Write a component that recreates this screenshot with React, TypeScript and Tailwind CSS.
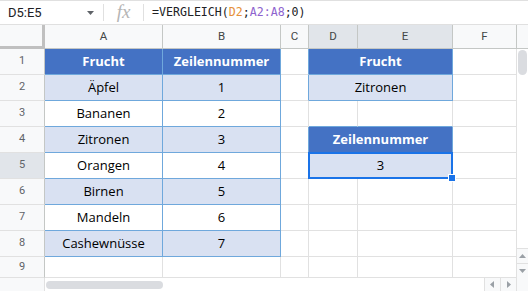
const cellFont = { fontFamily: '"Open Sans", "Noto Sans", sans-serif' };

const G = "border-[#e1e1e1]";
const B = "border-[#6fa8dc]";
const HEAD = "bg-[#4472c4] text-white font-bold";
const LIGHT = "bg-[#d9e1f2]";

const cols = ["A", "B", "C", "D", "E", "F"];

const fruits = [
  ["Äpfel", "1"],
  ["Bananen", "2"],
  ["Zitronen", "3"],
  ["Orangen", "4"],
  ["Birnen", "5"],
  ["Mandeln", "6"],
  ["Cashewnüsse", "7"],
];

function Tri({ dir, className = "" }: { dir: "up" | "down" | "left" | "right"; className?: string }) {
  const pts = {
    up: "1,6 4.5,2 8,6",
    down: "1,2 4.5,6 8,2",
    left: "6,1 2,4.5 6,8",
    right: "3,1 7,4.5 3,8",
  }[dir];
  return (
    <svg width="9" height="9" viewBox="0 0 9 9" className={className}>
      <polygon points={pts} fill="#9aa0a6" />
    </svg>
  );
}

function RowHead({ n, active = false }: { n: number; active?: boolean }) {
  return (
    <div
      className={`flex items-center justify-center border-r border-b border-r-[#c4c7c5] ${G} text-[11px] text-[#5f6368] ${
        active ? "bg-[#e1e5ea]" : "bg-[#f8f9fa]"
      }`}
      style={{ fontFamily: "Roboto, sans-serif" }}
    >
      {n}
    </div>
  );
}

function Cell({ className = "", children }: { className?: string; children?: React.ReactNode }) {
  return (
    <div className={`flex items-center justify-center border-r border-b text-[13px] ${className}`} style={cellFont}>
      {children}
    </div>
  );
}

export default function App() {
  return (
    <div className="w-[528px] h-[291px] overflow-hidden bg-white text-black">
      {/* formula bar */}
      <div className="h-[25px] border-t border-b border-[#e0e0e0] flex items-center">
        <div className="w-[103px] flex items-center pl-[8px] pr-[9px] text-[13px] text-[#202124]" style={{ fontFamily: "Roboto, sans-serif" }}>
          <span className="flex-1">D5:E5</span>
          <svg width="7" height="4" viewBox="0 0 7 4">
            <polygon points="0,0 7,0 3.5,4" fill="#5f6368" />
          </svg>
        </div>
        <div className="w-px h-[17px] bg-[#e0e0e0]" />
        <div className="w-[39px] flex justify-center text-[19px] italic text-[#b5b5b5] leading-none -mt-[2px]" style={{ fontFamily: '"Liberation Serif", serif' }}>
          fx
        </div>
        <div className="w-px h-[17px] bg-[#e0e0e0]" />
        <div className="pl-[8px] text-[11.6px] text-[#202124]" style={{ fontFamily: '"DejaVu Sans Mono", monospace' }}>
          =VERGLEICH(<span className="text-[#e69138]">D2</span>;<span className="text-[#8e63ce]">A2:A8</span>;0)
        </div>
      </div>

      {/* sheet grid */}
      <div className="grid grid-cols-[45px_118px_118px_28px_49px_95px_64px_11px] grid-rows-[24px_repeat(8,26px)_21px]">
        {/* column headers */}
        <div className="bg-[#f8f9fa] border-r-[3px] border-b-[3px] border-[#c0c0c0]" />
        {cols.map((c) => (
          <div
            key={c}
            className={`flex items-center justify-center border-r border-b border-[#c4c7c5] text-[11.5px] text-[#444746] ${
              c === "D" || c === "E" ? "bg-[#e1e5ea]" : "bg-[#f8f9fa]"
            }`}
            style={{ fontFamily: "Roboto, sans-serif" }}
          >
            {c}
          </div>
        ))}
        <div className="bg-[#f8f9fa] border-b border-[#c4c7c5]" />

        {/* row 1 */}
        <RowHead n={1} />
        <Cell className={`${HEAD} ${B}`}>Frucht</Cell>
        <Cell className={`${HEAD} ${B}`}>Zeilennummer</Cell>
        <Cell className={`border-b-[#e1e1e1] ${B}`} />
        <Cell className={`col-span-2 ${HEAD} ${B}`}>Frucht</Cell>
        <Cell className={G} />

        {/* vertical scrollbar */}
        <div className="row-span-9 flex flex-col bg-white">
          <div className="mt-[1px] mx-[1px] h-[25px] rounded-full bg-[#dadce0]" />
          <div className="flex-1" />
          <div className="h-[15px] border-t border-[#e1e1e1] bg-[#f8f9fa] flex items-center justify-center">
            <Tri dir="up" />
          </div>
          <div className="h-[15px] border-t border-[#e1e1e1] bg-[#f8f9fa] flex items-center justify-center">
            <Tri dir="down" />
          </div>
        </div>

        {fruits.map(([f, n], i) => {
          const row = i + 2;
          const fill = i % 2 === 0 ? LIGHT : "bg-white";
          return (
            <div key={f} className="contents">
              <RowHead n={row} active={row === 5} />
              <Cell className={`${fill} ${B}`}>{f}</Cell>
              <Cell className={`${fill} ${B}`}>{n}</Cell>
              {row === 2 && (
                <>
                  <Cell className={`border-b-[#e1e1e1] ${B}`} />
                  <Cell className={`col-span-2 ${LIGHT} ${B}`}>Zitronen</Cell>
                </>
              )}
              {row === 3 && (
                <>
                  <Cell className={G} />
                  <Cell className={`${G} border-b-[#6fa8dc]`} />
                  <Cell className={`${G} border-b-[#6fa8dc]`} />
                </>
              )}
              {row === 4 && (
                <>
                  <Cell className={`border-b-[#e1e1e1] ${B}`} />
                  <Cell className={`col-span-2 ${HEAD} ${B}`}>Zeilennummer</Cell>
                </>
              )}
              {row === 5 && (
                <>
                  <Cell className={`border-b-[#e1e1e1] ${B}`} />
                  <div className={`col-span-2 relative flex items-center justify-center border-r border-b ${B} ${LIGHT} text-[13px]`} style={cellFont}>
                    3
                    <div className="absolute -left-px -top-px -right-px -bottom-px border-2 border-[#1a73e8]" />
                    <div className="absolute -right-[4px] -bottom-[4px] w-[6px] h-[6px] bg-[#1a73e8] border border-white box-content" />
                  </div>
                </>
              )}
              {row > 5 && (
                <>
                  <Cell className={G} />
                  <Cell className={G} />
                  <Cell className={G} />
                </>
              )}
              <Cell className={G} />
            </div>
          );
        })}

        {/* row 9 */}
        <RowHead n={9} />
        {cols.map((c) => (
          <Cell key={c} className={G} />
        ))}
      </div>

      {/* horizontal scrollbar */}
      <div className="h-[13px] flex">
        <div className="w-[45px] bg-[#f8f9fa] border-r border-[#e1e1e1]" />
        <div className="w-[439px] flex items-center pl-[1px]">
          <div className="w-[117px] h-[8px] rounded-full bg-[#dadce0]" />
        </div>
        <div className="w-[16px] border-l border-[#e1e1e1] bg-[#f8f9fa] flex items-center justify-center">
          <Tri dir="left" />
        </div>
        <div className="w-[16px] border-l border-[#e1e1e1] bg-[#f8f9fa] flex items-center justify-center">
          <Tri dir="right" />
        </div>
        <div className="flex-1 border-l border-[#e1e1e1] bg-[#f8f9fa]" />
      </div>
    </div>
  );
}
